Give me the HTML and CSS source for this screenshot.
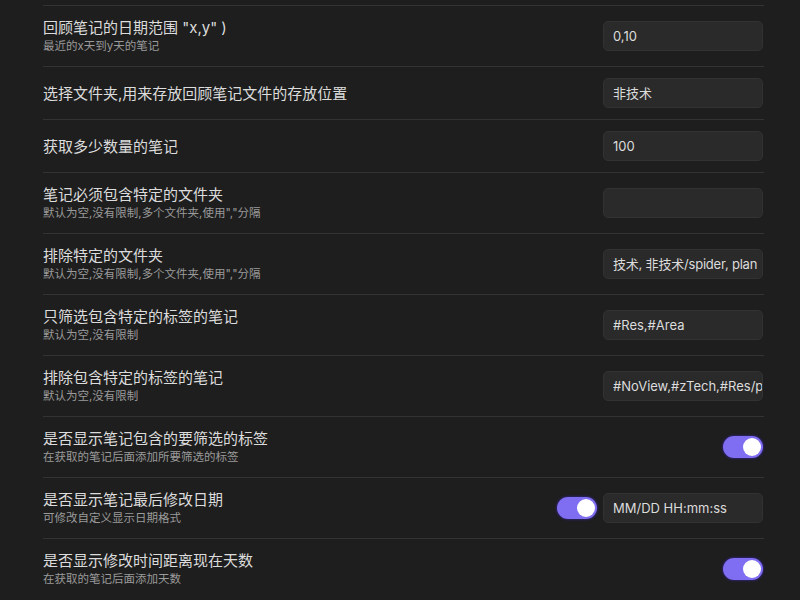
FILE: index.html
```html
<!DOCTYPE html>
<html lang="zh">
<head>
<meta charset="utf-8">
<title>设置</title>
<link rel="stylesheet" href="styles.css">
</head>
<body>
<div class="settings">
  <div class="item">
    <div class="info">
      <div class="name">回顾笔记的日期范围 "x,y" )</div>
      <div class="desc">最近的x天到y天的笔记</div>
    </div>
    <div class="control"><div class="input">0,10</div></div>
  </div>
  <div class="item">
    <div class="info">
      <div class="name">选择文件夹,用来存放回顾笔记文件的存放位置</div>
    </div>
    <div class="control"><div class="input">非技术</div></div>
  </div>
  <div class="item">
    <div class="info">
      <div class="name">获取多少数量的笔记</div>
    </div>
    <div class="control"><div class="input">100</div></div>
  </div>
  <div class="item">
    <div class="info">
      <div class="name">笔记必须包含特定的文件夹</div>
      <div class="desc">默认为空,没有限制,多个文件夹,使用","分隔</div>
    </div>
    <div class="control"><div class="input"></div></div>
  </div>
  <div class="item">
    <div class="info">
      <div class="name">排除特定的文件夹</div>
      <div class="desc">默认为空,没有限制,多个文件夹,使用","分隔</div>
    </div>
    <div class="control"><div class="input tight">技术, 非技术/spider, plan</div></div>
  </div>
  <div class="item">
    <div class="info">
      <div class="name">只筛选包含特定的标签的笔记</div>
      <div class="desc">默认为空,没有限制</div>
    </div>
    <div class="control"><div class="input">#Res,#Area</div></div>
  </div>
  <div class="item">
    <div class="info">
      <div class="name">排除包含特定的标签的笔记</div>
      <div class="desc">默认为空,没有限制</div>
    </div>
    <div class="control"><div class="input">#NoView,#zTech,#Res/p</div></div>
  </div>
  <div class="item">
    <div class="info">
      <div class="name">是否显示笔记包含的要筛选的标签</div>
      <div class="desc">在获取的笔记后面添加所要筛选的标签</div>
    </div>
    <div class="control"><div class="toggle"><span class="knob"></span></div></div>
  </div>
  <div class="item">
    <div class="info">
      <div class="name">是否显示笔记最后修改日期</div>
      <div class="desc">可修改自定义显示日期格式</div>
    </div>
    <div class="control"><div class="toggle"><span class="knob"></span></div><div class="input">MM/DD HH:mm:ss</div></div>
  </div>
  <div class="item">
    <div class="info">
      <div class="name">是否显示修改时间距离现在天数</div>
      <div class="desc">在获取的笔记后面添加天数</div>
    </div>
    <div class="control"><div class="toggle"><span class="knob"></span></div></div>
  </div>
</div>
</body>
</html>
```

FILE: styles.css
```css
html, body {
  margin: 0;
  padding: 0;
  background: #1e1e1e;
  height: 100%;
  overflow: hidden;
}
body {
  font-family: Inter, "Noto Sans CJK SC", sans-serif;
  color: #dadada;
}
.settings {
  margin: 5px 0 0 43px;
  width: 721px;
}
.item {
  display: flex;
  align-items: center;
  border-top: 1px solid #333333;
  padding: 11px 0;
  min-height: 29px;
}
.info {
  flex: 1;
  min-width: 0;
}
.name {
  font-size: 15px;
  line-height: 21px;
  color: #dcdcdc;
}
.desc {
  font-size: 11.5px;
  line-height: 17px;
  color: #9a9a9a;
}
.control {
  display: flex;
  align-items: center;
  gap: 6px;
  margin-right: 1px;
}
.input {
  box-sizing: border-box;
  width: 160px;
  height: 30px;
  background: #2a2a2a;
  border: 1px solid #323232;
  border-radius: 5px;
  padding: 0 9px;
  font-size: 13px;
  line-height: 28px;
  color: #dcdcdc;
  white-space: nowrap;
  overflow: hidden;
}
.input.tight {
  letter-spacing: -0.2px;
}
.toggle {
  position: relative;
  width: 40px;
  height: 22px;
  border-radius: 11px;
  background: #7f6df2;
  box-shadow: 0 0 2px 1px #2c2266;
}
.knob {
  position: absolute;
  top: 2px;
  right: 2px;
  width: 18px;
  height: 18px;
  border-radius: 50%;
  background: #ffffff;
}
```
